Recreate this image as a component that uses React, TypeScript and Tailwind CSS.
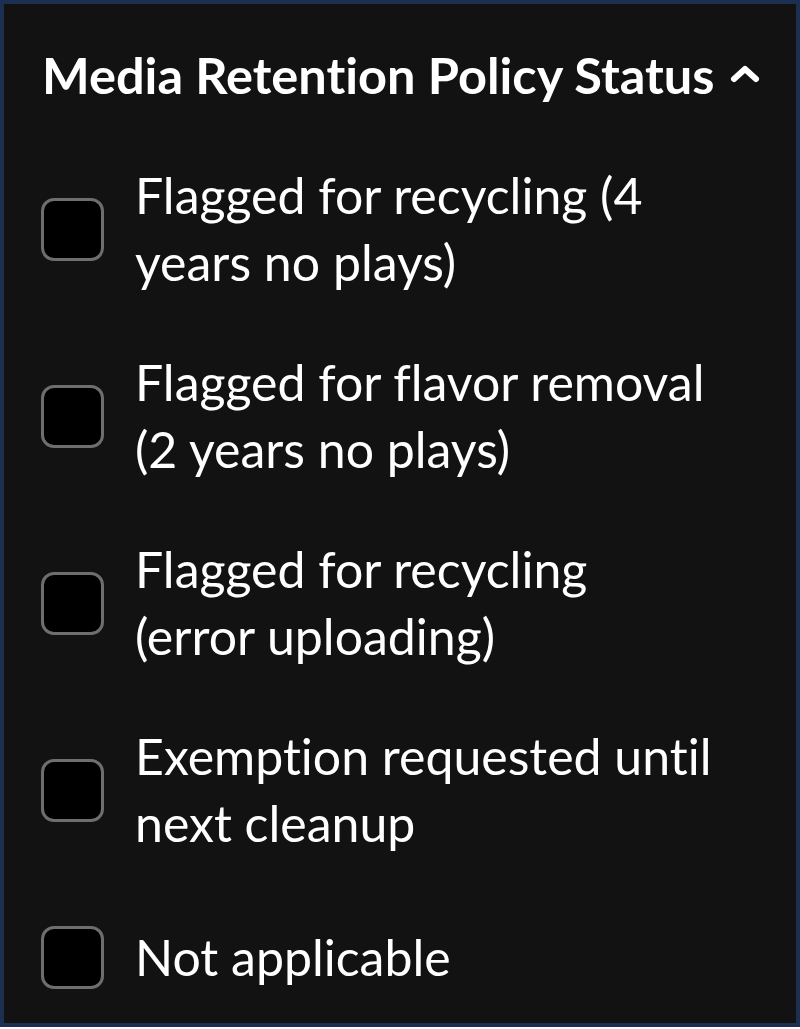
import React from "react";

const options = [
  "Flagged for recycling (4 years no plays)",
  "Flagged for flavor removal (2 years no plays)",
  "Flagged for recycling (error uploading)",
  "Exemption requested until next cleanup",
  "Not applicable",
];

function ChevronUp() {
  return (
    <svg width="32" height="22" viewBox="0 0 32 22" className="shrink-0 mb-[4px]">
      <polyline
        points="5,17 16,7 27,17"
        fill="none"
        stroke="white"
        strokeWidth="6"
        strokeLinecap="round"
        strokeLinejoin="round"
      />
    </svg>
  );
}

export default function App() {
  return (
    <div
      className="w-[800px] h-[1027px] bg-[#121212] border-4 border-[#1d2f50] text-white flex flex-col [font-variant-ligatures:none]"
      style={{ fontFamily: "Lato, 'Open Sans', sans-serif" }}
    >
      {/* header */}
      <div className="flex items-center gap-[15px] pl-[38px] pt-[41px]">
        <h2 className="text-[50.5px] leading-[60px] font-bold">Media Retention Policy Status</h2>
        <ChevronUp />
      </div>

      {/* checkbox list */}
      <div className="flex flex-col gap-[53px] pl-[37px] pt-[57px]">
        {options.map((label, i) => (
          <label
            key={label}
            className={`flex items-center gap-[31px] ${i === options.length - 1 ? "mt-[14px]" : ""}`}
          >
            <span className="w-[63px] h-[63px] shrink-0 rounded-[13px] border-[3px] border-[#6e6e6e] bg-black" />
            <span className="text-[50px] leading-[67px] w-[580px]">{label}</span>
          </label>
        ))}
      </div>
    </div>
  );
}
